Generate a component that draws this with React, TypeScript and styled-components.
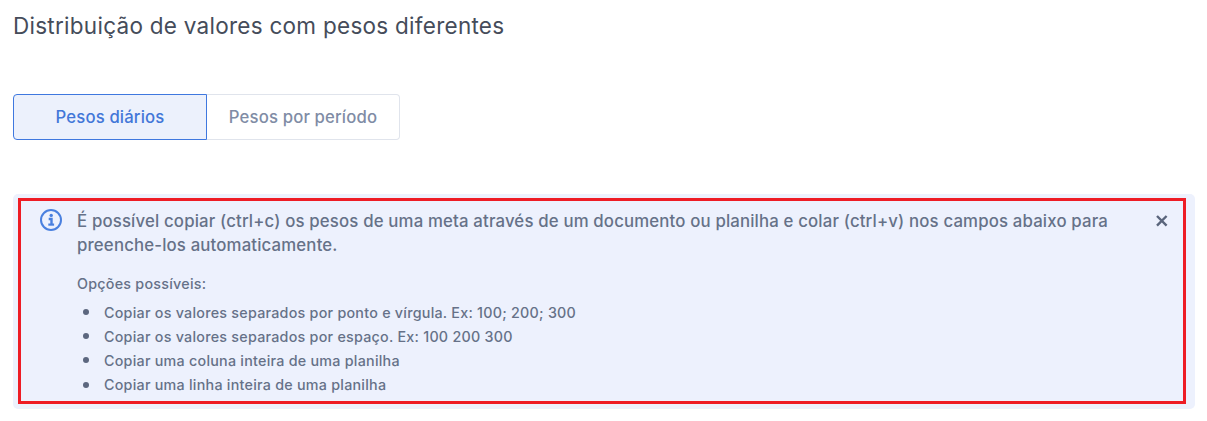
import React from "react";
import styled, { createGlobalStyle } from "styled-components";

const GlobalStyle = createGlobalStyle`
  * { box-sizing: border-box; }
  body { margin: 0; background: #fff; font-family: Inter, "Liberation Sans", sans-serif; font-optical-sizing: none; }
`;
const Page = styled.main`
  height: 421px;
  padding: 12px 12px 0 13px;
  overflow: hidden;
`;
const Title = styled.h1`
  margin: 0;
  font-size: 22.5px;
  line-height: 28px;
  font-weight: 400;
  letter-spacing: 0.27px;
  color: #454c5a;
  white-space: nowrap;
`;
const Tabs = styled.div`
  display: flex;
  margin-top: 54px;
`;
const Tab = styled.button<{ $active?: boolean }>`
  width: ${(p) => (p.$active ? 194 : 193)}px;
  height: 46px;
  padding: 0 0 1px;
  font: 500 16.7px/20px Inter, sans-serif;
  letter-spacing: 0.16px;
  color: ${(p) => (p.$active ? "#4277d8" : "#808ca5")};
  background: ${(p) => (p.$active ? "#ecf1fc" : "#fff")};
  border: 1px solid ${(p) => (p.$active ? "#3f78df" : "#e0e4ec")};
  border-left-width: ${(p) => (p.$active ? 1 : 0)}px;
  border-radius: ${(p) => (p.$active ? "4px 0 0 4px" : "0 4px 4px 0")};
`;
const Notice = styled.section`
  margin-top: 54px;
  width: 1182px;
  height: 215px;
  padding: 4px 9px 5px 5px;
  border-radius: 5px;
  background: #edf1fd;
`;
const Highlight = styled.div`
  display: flex;
  height: 100%;
  border: 3px solid #ee1c25;
  padding: 7px 15px 0 19px;
`;
const Body = styled.div`
  flex: 1;
  margin-left: 15px;
  padding-top: 1px;
  color: #667188;
`;
const Message = styled.p`
  margin: 0;
  font-size: 16.8px;
  line-height: 24px;
  font-weight: 500;
  letter-spacing: 0.157px;
  white-space: nowrap;
`;
const Small = styled.p`
  margin: 17px 0 6px;
  font-size: 14.3px;
  line-height: 20px;
  font-weight: 500;
  letter-spacing: 0.25px;
`;
const Options = styled.ul`
  margin: 0;
  padding: 0;
  list-style: none;
`;
const Option = styled.li`
  display: flex;
  align-items: center;
  height: 24.2px;
  font-size: 14.3px;
  font-weight: 500;
  letter-spacing: 0.25px;
  &::before {
    content: "";
    width: 6px;
    height: 6px;
    margin: 0 15px 0 6px;
    border-radius: 50%;
    background: #5c677f;
  }
`;

const InfoIcon = styled.svg`
  flex: none;
  width: 22px;
  height: 22px;
  margin-top: 1px;
`;
const CloseIcon = styled.svg`
  flex: none;
  width: 12px;
  height: 12px;
  margin-top: 7px;
`;

const options = [
  "Copiar os valores separados por ponto e vírgula. Ex: 100; 200; 300",
  "Copiar os valores separados por espaço. Ex: 100 200 300",
  "Copiar uma coluna inteira de uma planilha",
  "Copiar uma linha inteira de uma planilha",
];

export default function App() {
  return (
    <Page>
      <GlobalStyle />
      <Title>Distribuição de valores com pesos diferentes</Title>
      <Tabs>
        <Tab $active>Pesos diários</Tab>
        <Tab>Pesos por período</Tab>
      </Tabs>
      <Notice>
        <Highlight>
          <InfoIcon viewBox="0 0 22 22" fill="none" stroke="#4a80df" strokeWidth="2">
            <circle cx="11" cy="11" r="10" />
            <path d="M8.7 10h2.8v6" strokeWidth="2.4" />
            <path d="M8.3 15.6h5.8" strokeWidth="2.2" />
            <circle cx="11.2" cy="6.4" r="1.7" fill="#4a80df" stroke="none" />
          </InfoIcon>
          <Body>
            <Message>
              É possível copiar (ctrl+c) os pesos de uma meta através de um documento ou planilha e colar (ctrl+v) nos campos abaixo para
              <br />
              preenche-los automaticamente.
            </Message>
            <Small>Opções possíveis:</Small>
            <Options>
              {options.map((o) => (
                <Option key={o}>{o}</Option>
              ))}
            </Options>
          </Body>
          <CloseIcon viewBox="0 0 12 12" stroke="#5a657c" strokeWidth="2.4">
            <path d="M1 1l9.6 9.6M10.6 1L1 10.6" />
          </CloseIcon>
        </Highlight>
      </Notice>
    </Page>
  );
}
